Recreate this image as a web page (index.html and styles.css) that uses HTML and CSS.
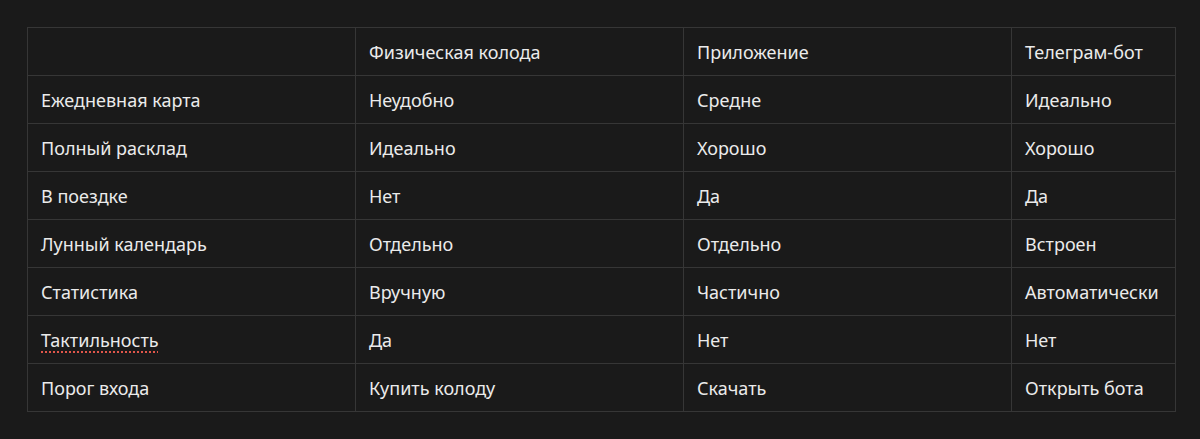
FILE: index.html
```html
<!DOCTYPE html>
<html lang="ru">
<head>
<meta charset="utf-8">
<link rel="stylesheet" href="styles.css">
</head>
<body>
<div class="wrap">
<table class="cmp">
  <colgroup>
    <col class="c-wide"><col class="c-wide"><col class="c-wide"><col class="c-narrow">
  </colgroup>
  <thead>
    <tr><th></th><th>Физическая колода</th><th>Приложение</th><th>Телеграм-бот</th></tr>
  </thead>
  <tbody>
    <tr><td>Ежедневная карта</td><td>Неудобно</td><td>Средне</td><td>Идеально</td></tr>
    <tr><td>Полный расклад</td><td>Идеально</td><td>Хорошо</td><td>Хорошо</td></tr>
    <tr><td>В поездке</td><td>Нет</td><td>Да</td><td>Да</td></tr>
    <tr><td>Лунный календарь</td><td>Отдельно</td><td>Отдельно</td><td>Встроен</td></tr>
    <tr><td>Статистика</td><td>Вручную</td><td>Частично</td><td>Автоматически</td></tr>
    <tr><td><span class="spell">Тактильность</span></td><td>Да</td><td>Нет</td><td>Нет</td></tr>
    <tr><td>Порог входа</td><td>Купить колоду</td><td>Скачать</td><td>Открыть бота</td></tr>
  </tbody>
</table>
</div>
</body>
</html>
```

FILE: styles.css
```css
html, body {
  margin: 0;
  padding: 0;
  background: #1a1a1a;
}
.wrap {
  padding: 27px 0 0 27px;
}
.cmp {
  border-collapse: collapse;
  table-layout: fixed;
  width: 1148px;
  font-family: "Noto Sans", "Open Sans", sans-serif;
  font-size: 18px;
  color: #ebebeb;
}
.c-wide { width: 328px; }
.c-narrow { width: 164px; }
.cmp th, .cmp td {
  border: 1px solid #363636;
  height: 48px;
  padding: 0 13px;
  text-align: left;
  font-weight: 400;
  white-space: nowrap;
  box-sizing: border-box;
  vertical-align: middle;
}
.spell {
  text-decoration: underline dotted #e0564a;
  text-decoration-thickness: 2px;
  text-underline-offset: 5px;
}
```
